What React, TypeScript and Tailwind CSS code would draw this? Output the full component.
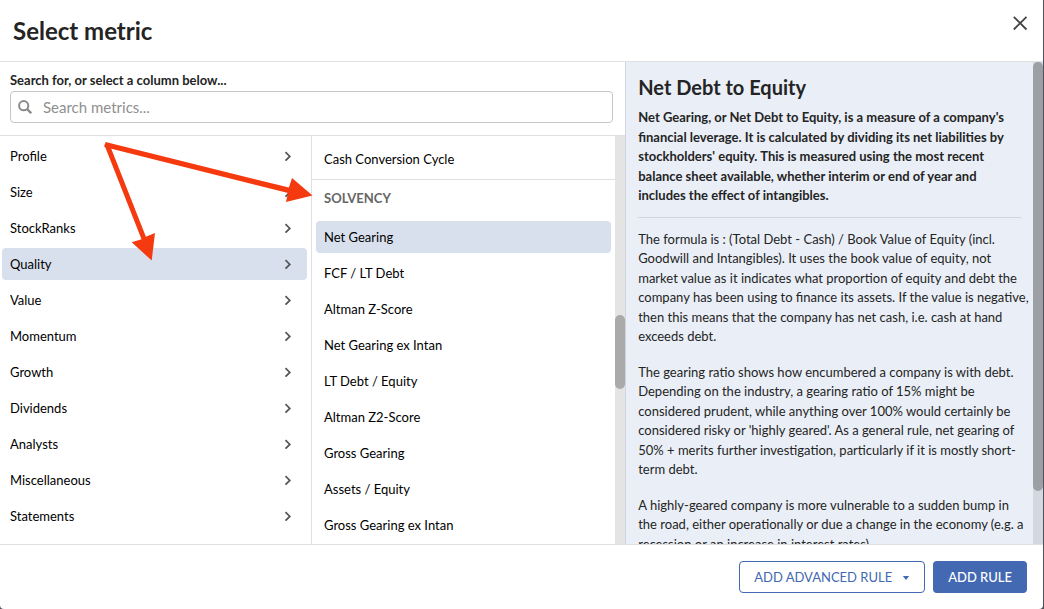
import React from "react";

type Category = { name: string; expandable: boolean };

const categories: Category[] = [
  { name: "Profile", expandable: true },
  { name: "Size", expandable: true },
  { name: "StockRanks", expandable: true },
  { name: "Quality", expandable: true },
  { name: "Value", expandable: true },
  { name: "Momentum", expandable: true },
  { name: "Growth", expandable: true },
  { name: "Dividends", expandable: true },
  { name: "Analysts", expandable: true },
  { name: "Miscellaneous", expandable: true },
  { name: "Statements", expandable: true },
];

const solvency = [
  "Net Gearing",
  "FCF / LT Debt",
  "Altman Z-Score",
  "Net Gearing ex Intan",
  "LT Debt / Equity",
  "Altman Z2-Score",
  "Gross Gearing",
  "Assets / Equity",
  "Gross Gearing ex Intan",
];

const row = "flex h-8 w-full shrink-0 items-center rounded px-2 text-left text-[13px] leading-5 text-black";

function Chevron() {
  return (
    <svg className="mr-[3px] h-4 w-4 text-[#555]" viewBox="0 0 16 16" fill="none" stroke="currentColor" strokeWidth="1.7" aria-hidden="true">
      <path d="M5.5 4.2 9.8 8.4l-4.3 4.2" />
    </svg>
  );
}

function Header() {
  return (
    <header className="flex h-[62px] shrink-0 items-start justify-between border-b border-[#e0e0e0] pt-[11px] pr-[11px] pl-[13px]">
      <h1 className="pt-[5px] text-2xl leading-[30px] font-bold text-[#242424]">Select metric</h1>
      <button type="button" aria-label="Close" className="flex h-6 w-6 items-center justify-center text-[#444]">
        <svg className="h-4 w-4" viewBox="0 0 16 16" fill="none" stroke="currentColor" strokeWidth="1.8" aria-hidden="true">
          <path d="M1.8 1.8 14.5 14.5M14.5 1.8 1.8 14.5" />
        </svg>
      </button>
    </header>
  );
}

function Search() {
  return (
    <div className="shrink-0 border-b border-[#e0e0e0] pt-2 pr-3 pb-3 pl-[10px]">
      <label htmlFor="metric-search" className="block h-[21px] text-[13px] leading-5 font-bold text-[#242424]">
        Search for, or select a column below...
      </label>
      <div className="flex h-8 items-center rounded border border-[#c6c6c6] bg-white px-[7px]">
        <svg className="h-3.5 w-3.5 shrink-0 text-[#8a8a8a]" viewBox="0 0 14 14" fill="none" stroke="currentColor" strokeWidth="2" aria-hidden="true">
          <circle cx="5.7" cy="5.7" r="4.6" />
          <path d="M9 9l4.2 4.2" strokeWidth="2.3" />
        </svg>
        <input
          id="metric-search"
          type="text"
          placeholder="Search metrics..."
          className="ml-[11px] min-w-0 flex-1 bg-transparent text-[15px] text-black outline-none placeholder:text-[#8f8f8f]"
        />
      </div>
    </div>
  );
}

function Metrics() {
  return (
    <div className="flex min-w-0 flex-1">
      <div className="flex min-w-0 flex-1 flex-col overflow-hidden">
        <div className="shrink-0 border-b border-[#e0e0e0] px-1 pt-[7px] pb-1">
          <button type="button" className={row}>Cash Conversion Cycle</button>
        </div>
        <h3 className="flex h-[41px] shrink-0 items-center px-3 pb-1 text-[13px] font-bold text-[#666]">SOLVENCY</h3>
        <div className="flex flex-col gap-1 px-1">
          {solvency.map((name, i) => (
            <button key={name} type="button" className={i === 0 ? row + " bg-[#d9e0ed]" : row}>
              {name}
            </button>
          ))}
        </div>
      </div>
      <div className="w-[10px] shrink-0 bg-[#e4e4e4] pt-[179px]">
        <div className="h-[74px] rounded-full bg-[#aaa]" />
      </div>
    </div>
  );
}

function Details() {
  return (
    <aside className="flex min-w-0 flex-2 border-l border-[#cfd6e2] bg-[#eaeff7] text-[#242424]">
      <div className="min-w-0 flex-1 overflow-hidden px-3 pt-[11px] text-[13px] leading-normal">
        <h2 className="pb-[7px] text-xl leading-7 font-bold">Net Debt to Equity</h2>
        <p className="border-b border-[#cfd6e2] pb-[11px] font-bold">
          Net Gearing, or Net Debt to Equity, is a measure of a company's financial leverage. It is calculated by
          dividing its net liabilities by stockholders' equity. This is measured using the most recent balance sheet
          available, whether interim or end of year and includes the effect of intangibles.
        </p>
        <div className="-mr-2.5 flex flex-col gap-4 pt-3">
          <p>
            The formula is : (Total Debt - Cash) / Book Value of Equity (incl. Goodwill and Intangibles). It uses the
            book value of equity, not market value as it indicates what proportion of equity and debt the company has
            been using to finance its assets. If the value is negative, then this means that the company has net cash,
            i.e. cash at hand exceeds debt.
          </p>
          <p>
            The gearing ratio shows how encumbered a company is with debt. Depending on the industry, a gearing ratio of
            15% might be considered prudent, while anything over 100% would certainly be considered risky or 'highly
            geared'. As a general rule, net gearing of 50% + merits further investigation, particularly if it is mostly
            short-term debt.
          </p>
          <p>
            A highly-geared company is more vulnerable to a sudden bump in the&nbsp;road, either operationally or due a
            change in the economy (e.g. a recession or an increase in interest rates).
          </p>
        </div>
      </div>
      <div className="w-[10px] shrink-0 bg-[#d3d7df]">
        <div className="h-[429px] rounded-full bg-[#9ca0a5]" />
      </div>
    </aside>
  );
}

function Arrows() {
  return (
    <svg className="pointer-events-none absolute top-0 left-0 h-[130px] w-[320px]" viewBox="0 136 320 130" fill="#f63a10" aria-hidden="true">
      <path d="M105.6 142 288.9 187.6 292 178 312.5 195.5 286 202 288 193 104.3 147Z" />
      <path d="M104.3 144.8 141.5 239.2 131.7 242.3 151.7 260.5 155 233 145.9 236.8 109 143Z" />
    </svg>
  );
}

export default function App() {
  return (
    <div className="h-screen overflow-hidden bg-[#50505a] pr-px font-['Lato',sans-serif]">
      <main className="flex h-full flex-col rounded-b-sm bg-white">
        <Header />
        <div className="flex min-h-0 flex-1">
          <section className="flex min-w-0 flex-3 flex-col">
            <Search />
            <div className="relative flex min-h-0 flex-1">
              <nav aria-label="Categories" className="flex w-[312px] shrink-0 flex-col gap-1 overflow-hidden border-r border-[#e0e0e0] pt-1 pr-1 pl-[2px]">
                {categories.map((c) => (
                  <button key={c.name} type="button" className={c.name === "Quality" ? row + " bg-[#d9e0ed]" : row}>
                    <span className="flex-1">{c.name}</span>
                    {c.expandable && <Chevron />}
                  </button>
                ))}
              </nav>
              <Metrics />
              <Arrows />
            </div>
          </section>
          <Details />
        </div>
        <footer className="flex h-[65px] shrink-0 items-center justify-end gap-2 border-t border-[#e0e0e0] px-4">
          <button type="button" className="flex h-8 items-center rounded border border-[#4269b1] px-[14px] pt-px text-[13px] text-[#4269b1]">
            ADD ADVANCED RULE
            <svg className="ml-[10px] h-1 w-2" viewBox="0 0 8 4" fill="currentColor" aria-hidden="true">
              <path d="M.8 0h6.4L4 4Z" />
            </svg>
          </button>
          <button type="button" className="h-8 rounded bg-[#4269b1] px-[15px] pt-px text-[13px] font-medium text-white">ADD RULE</button>
        </footer>
      </main>
    </div>
  );
}
